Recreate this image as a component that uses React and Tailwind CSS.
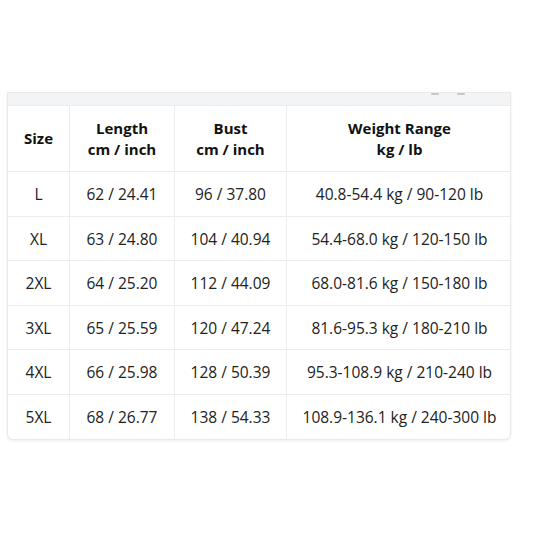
const rows = [
  ["L", "62 / 24.41", "96 / 37.80", "40.8-54.4 kg / 90-120 lb"],
  ["XL", "63 / 24.80", "104 / 40.94", "54.4-68.0 kg / 120-150 lb"],
  ["2XL", "64 / 25.20", "112 / 44.09", "68.0-81.6 kg / 150-180 lb"],
  ["3XL", "65 / 25.59", "120 / 47.24", "81.6-95.3 kg / 180-210 lb"],
  ["4XL", "66 / 25.98", "128 / 50.39", "95.3-108.9 kg / 210-240 lb"],
  ["5XL", "68 / 26.77", "138 / 54.33", "108.9-136.1 kg / 240-300 lb"],
];

const cols = "grid grid-cols-[62px_105px_112px_225px]";

export default function App() {
  return (
    <div className="w-[533px] h-[533px] bg-white pt-[92px] pl-[7px] font-['Open_Sans','Noto_Sans',sans-serif]">
      <div className="w-[504px] rounded-b-[6px] border border-[#e9e9e9] shadow-[0_1px_3px_rgba(0,0,0,0.08)] overflow-hidden bg-white">
        <div className="relative h-[13px] bg-[#f3f4f6] border-b border-[#ececec]">
          <span className="absolute left-[423px] top-[0px] w-[8px] h-[2px] rounded bg-[#c8c8c8]"></span>
          <span className="absolute left-[449px] top-[0px] w-[8px] h-[2px] rounded bg-[#c8c8c8]"></span>
        </div>
        <div className={`${cols} h-[66px] border-b border-[#ececec] text-[15px] font-bold text-[#111] leading-[21px]`}>
          <div className="flex items-center justify-center border-r border-[#ececec]">Size</div>
          <div className="flex flex-col items-center justify-center border-r border-[#ececec]">
            <span>Length</span>
            <span>cm / inch</span>
          </div>
          <div className="flex flex-col items-center justify-center border-r border-[#ececec]">
            <span>Bust</span>
            <span>cm / inch</span>
          </div>
          <div className="flex flex-col items-center justify-center">
            <span>Weight Range</span>
            <span>kg / lb</span>
          </div>
        </div>
        {rows.map((r, i) => (
          <div
            key={r[0]}
            className={`${cols} h-[44.5px] text-[15.5px] text-[#222] ${
              i < rows.length - 1 ? "border-b border-[#ececec]" : ""
            }`}
          >
            <div className="flex items-center justify-center border-r border-[#ececec] pt-[2px]">{r[0]}</div>
            <div className="flex items-center justify-center border-r border-[#ececec] pt-[2px]">{r[1]}</div>
            <div className="flex items-center justify-center border-r border-[#ececec] pt-[2px]">{r[2]}</div>
            <div className="flex items-center justify-center pt-[2px]">{r[3]}</div>
          </div>
        ))}
      </div>
    </div>
  );
}
